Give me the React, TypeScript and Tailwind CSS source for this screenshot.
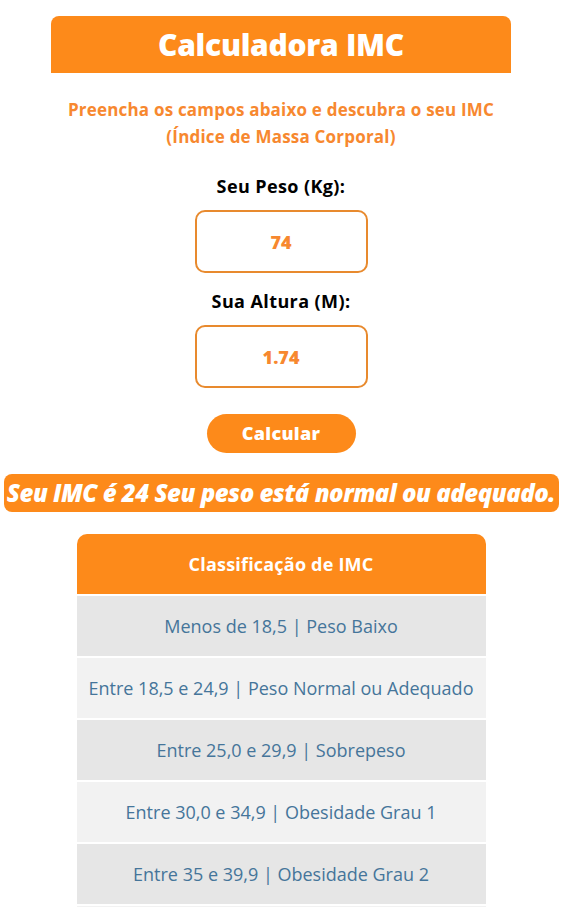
import React from "react";

const faixas = [
  "Menos de 18,5 | Peso Baixo",
  "Entre 18,5 e 24,9 | Peso Normal ou Adequado",
  "Entre 25,0 e 29,9 | Sobrepeso",
  "Entre 30,0 e 34,9 | Obesidade Grau 1",
  "Entre 35 e 39,9 | Obesidade Grau 2",
  "Mais de 40 | Obesidade Grau 3",
];

function Campo({ label, value, top }: { label: string; value: string; top: string }) {
  return (
    <div className={`flex flex-col items-center ${top}`}>
      <label className="text-[18px] font-bold leading-[22px] tracking-[0.4px] text-black">{label}</label>
      <input
        defaultValue={value}
        className="mt-[13px] h-[63px] w-[173px] rounded-[10px] border-2 border-[#e88a2e] bg-white text-center text-[18px] font-extrabold text-[#f7882f] outline-none"
      />
    </div>
  );
}

export default function App() {
  return (
    <div className="h-[907px] overflow-hidden bg-white font-['Open_Sans',sans-serif]">
      <div className="flex w-[562px] flex-col items-center pt-4">
        <div className="flex h-[57px] w-[460px] items-center justify-center rounded-t-[8px] bg-[#fd8a1a]">
          <h1 className="text-[30px] font-extrabold tracking-[-0.3px] text-white">Calculadora IMC</h1>
        </div>

        <p className="mt-[23px] text-center text-[17px] font-bold leading-[27px] tracking-[0.2px] text-[#f7882f]">
          Preencha os campos abaixo e descubra o seu IMC
          <br />
          (Índice de Massa Corporal)
        </p>

        <Campo label="Seu Peso (Kg):" value="74" top="mt-[25px]" />
        <Campo label="Sua Altura (M):" value="1.74" top="mt-[17px]" />

        <button className="mt-[26px] h-[39px] w-[149px] rounded-full bg-[#fd8a1a] text-[18px] font-extrabold tracking-[0.3px] text-white">
          Calcular
        </button>

        <div className="mt-[21px] flex h-[38px] w-[555px] items-center justify-center rounded-[8px] bg-[#fd8a1a]">
          <span className="whitespace-nowrap text-[24px] font-extrabold italic tracking-[-0.5px] text-white">
            Seu IMC é 24 Seu peso está normal ou adequado.
          </span>
        </div>

        <div className="mt-[22px] w-[409px]">
          <div className="flex h-[60px] items-center justify-center rounded-t-[10px] bg-[#fd8a1a] text-[18px] font-bold tracking-[0.2px] text-white">
            Classificação de IMC
          </div>
          {faixas.map((f, i) => (
            <div
              key={f}
              className={`mt-[2px] flex h-[60px] items-center justify-center text-[18px] font-medium text-[#45759a] ${
                i % 2 === 0 ? "bg-[#e6e6e6]" : "bg-[#f2f2f2]"
              }`}
            >
              {f}
            </div>
          ))}
        </div>
      </div>
    </div>
  );
}
